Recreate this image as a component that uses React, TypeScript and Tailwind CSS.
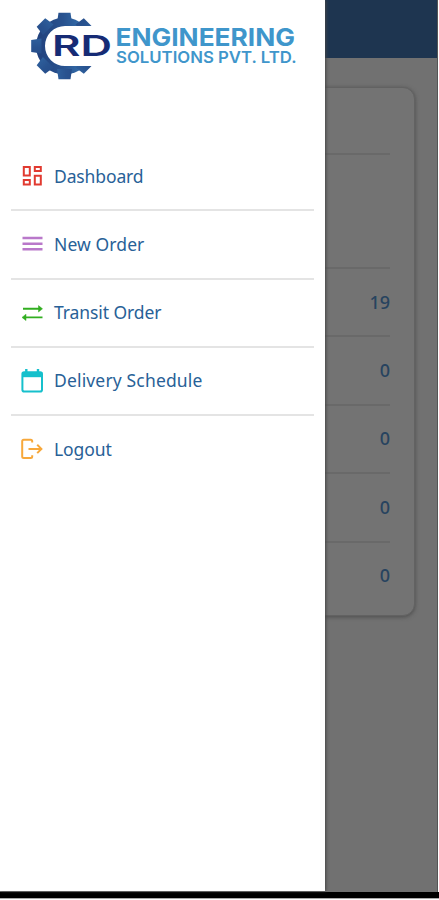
import React from "react";

const TEETH = [90, 135, 180, 225, 270, 315, 45];

function Logo() {
  return (
    <svg width="276" height="80" viewBox="25 6 276 80" className="block" aria-label="RD Engineering Solutions Pvt. Ltd.">
      <defs>
        <linearGradient id="gear" x1="31" y1="0" x2="95" y2="0" gradientUnits="userSpaceOnUse">
          <stop offset="0" stopColor="#203d78" />
          <stop offset="0.5" stopColor="#28528f" />
          <stop offset="1" stopColor="#3c80bd" />
        </linearGradient>
        <mask id="cut" maskUnits="userSpaceOnUse" x="25" y="6" width="80" height="80">
          <path d="M25 6H84L92 26H66V66H92L84 86H25Z" fill="#fff" />
          <path d="M100 26H65a20 20 0 0 0 0 40h35Z" fill="#000" />
        </mask>
      </defs>
      <g mask="url(#cut)">
        <g fill="url(#gear)">
          <circle cx="64.5" cy="46" r="28.5" />
          {TEETH.map((a) => (
            <path key={a} d="M57 23L58.5 12.7H70.5L72 23Z" transform={`rotate(${a - 270} 64.5 46)`} />
          ))}
        </g>
      </g>
      <g fontFamily="Inter, sans-serif" fontWeight="600">
        <text x="52" y="56" fontSize="28.5" textLength="60" lengthAdjust="spacingAndGlyphs" fill="#162b75">RD</text>
        <g fill="#3f96cb">
          <text x="115.5" y="45.8" fontSize="24" fontWeight="700" textLength="179.5" lengthAdjust="spacingAndGlyphs">ENGINEERING</text>
          <text x="116" y="63.4" fontSize="16.5" textLength="180.5" lengthAdjust="spacingAndGlyphs">SOLUTIONS PVT. LTD.</text>
        </g>
      </g>
    </svg>
  );
}

function DashboardIcon() {
  return (
    <svg width="22" height="22" viewBox="0 0 22 22" fill="none" stroke="#e13a30" strokeWidth="2">
      <path d="M2.8 2h6v8.6h-6zM13.8 2h6v4h-6zM2.8 15h6v4.4h-6zM13.8 10.8h6v8.6h-6z" />
    </svg>
  );
}

function MenuIcon() {
  return (
    <svg width="22" height="22" viewBox="0 0 22 22" stroke="#b978ca" strokeWidth="2.6">
      <path d="M1.5 5h20M1.5 10.7h20M1.5 16.3h20" />
    </svg>
  );
}

function TransitIcon() {
  return (
    <svg width="22" height="22" viewBox="0 0 22 22" fill="#32ae20" stroke="#32ae20" strokeWidth="1.9">
      <path d="M2 6.8H18M4 15.4h17.5" fill="none" />
      <path d="M17.5 3.6L21.5 6.8l-4 3.2zM5 12.2L1 15.4 5 18.6z" strokeWidth=".5" />
    </svg>
  );
}

function CalendarIcon() {
  return (
    <svg width="22" height="24" viewBox="0 0 22 24" fill="none" stroke="#16c0cc" strokeWidth="2">
      <rect x="1.4" y="3.2" width="19.6" height="19.4" rx="1.8" />
      <path d="M1.2 5.8h20" strokeWidth="4.8" />
      <path d="M5.3 0v4M17 0v4" strokeWidth="2.4" />
    </svg>
  );
}

function LogoutIcon() {
  return (
    <svg width="22" height="22" viewBox="0 0 22 22" fill="none" stroke="#f7a83b" strokeWidth="2">
      <path d="M11.2 4.5V3.2a1.5 1.5 0 0 0-1.5-1.5H2.7A1.5 1.5 0 0 0 1.2 3.2v15.4a1.5 1.5 0 0 0 1.5 1.5h7a1.5 1.5 0 0 0 1.5-1.5v-1.3" />
      <path d="M7.5 10.9H20M16.2 6.7l4.2 4.2-4.2 4.2" />
    </svg>
  );
}

const ITEMS = [
  { label: "Dashboard", icon: <DashboardIcon />, spacing: "tracking-[-0.12px]" },
  { label: "New Order", icon: <MenuIcon />, spacing: "tracking-[0.1px]" },
  { label: "Transit Order", icon: <TransitIcon />, spacing: "tracking-[-0.08px]" },
  { label: "Delivery Schedule", icon: <CalendarIcon />, spacing: "tracking-[0.16px]" },
  { label: "Logout", icon: <LogoutIcon />, spacing: "tracking-[-0.1px]" },
];

const COUNTS = [19, 0, 0, 0, 0];

export default function App() {
  return (
    <div className="relative flex h-[900px] w-[439px] flex-col overflow-hidden bg-white font-['Noto_Sans',sans-serif]">
      <main className="mr-px flex h-[892px] flex-col border-r border-[#555] bg-[#717171]">
        <header className="h-[58px] shrink-0 bg-[#1e3550]" />
        <section className="mt-[29px] mr-[22px] ml-6 h-[529px] rounded-[12px] border border-[#626262] bg-[#737373] pr-6 pl-5 shadow-[0_1px_4px_#4d4d4d]">
          <div className="h-[67px] border-b-2 border-[#696969]" />
          <div className="h-[114px] border-b-2 border-[#696969]" />
          {COUNTS.map((n, i) => (
            <div
              key={i}
              className="flex h-[68.4px] items-center justify-end border-b-2 border-[#696969] text-[18px] font-medium text-[#27435f] last:border-b-0 last:pb-0.5"
            >
              {n}
            </div>
          ))}
        </section>
      </main>
      <div className="h-1.5 shrink-0 bg-black" />
      <div className="h-px shrink-0 bg-[#aaa]" />
      <aside className="absolute top-0 left-0 h-[891px] w-[325px] bg-white shadow-[1px_0_3px_#444]">
        <div className="pt-1.5 pl-[25px]">
          <Logo />
        </div>
        <nav className="mt-[57px] mr-[11px] ml-[11px] flex flex-col">
          {ITEMS.map((item) => (
            <div
              key={item.label}
              className="flex h-[68.3px] items-center border-b-2 border-[#e4e4e4] pl-[10px] last:border-b-0 last:pb-0.5"
            >
              <span className="flex w-[33px] shrink-0">{item.icon}</span>
              <span className={`pb-px text-[17.5px] text-[#286197] ${item.spacing}`}>{item.label}</span>
            </div>
          ))}
        </nav>
      </aside>
    </div>
  );
}
